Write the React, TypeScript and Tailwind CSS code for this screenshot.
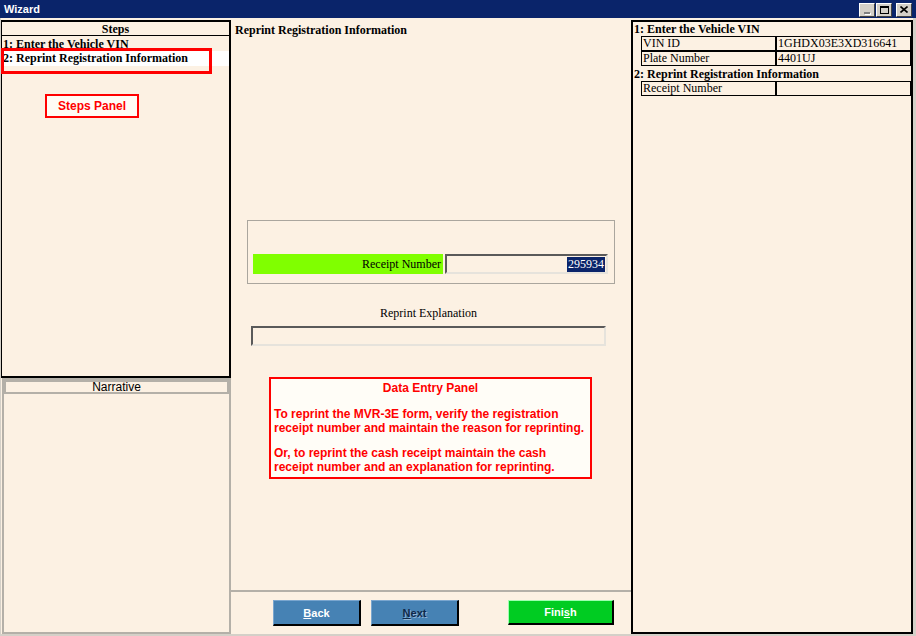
import React from 'react';

const serif = { fontFamily: '"Liberation Serif", "Times New Roman", serif' };
const sans = { fontFamily: '"Liberation Sans", Arial, sans-serif' };

const TitleButton: React.FC<{ children: React.ReactNode; dim?: boolean }> = ({ children, dim }) => (
    <div className={`w-[16px] h-[14px] bg-[#d4d0c8] border-t border-l border-white border-r border-b border-r-[#404040] border-b-[#404040] flex items-center justify-center ${dim ? 'text-[#808080]' : 'text-black'}`}>
        {children}
    </div>
);

const SummaryRow: React.FC<{ label: string; value: string }> = ({ label, value }) => (
    <div className="flex h-[15px] text-[12px] leading-[13px] text-black">
        <div className="w-[135px] border border-black pl-[1px] overflow-hidden whitespace-nowrap">{label}</div>
        <div className="flex-1 border border-black pl-[1px] overflow-hidden whitespace-nowrap">{value}</div>
    </div>
);

const App: React.FC = () => {
    return (
        <div className="w-[916px] h-[636px] bg-[#d4d0c8] flex flex-col overflow-hidden select-none">
            {/* title bar */}
            <div className="h-[18px] bg-[#0a246a] flex items-center pl-[4px] pr-[4px]">
                <span className="text-white font-bold text-[11px]" style={sans}>Wizard</span>
                <div className="ml-auto flex items-center gap-[1px] mt-[1px]">
                    <TitleButton dim>
                        <div className="w-[6px] h-[2px] bg-[#808080] mt-[6px] shadow-[1px_1px_0_#fff]" />
                    </TitleButton>
                    <TitleButton>
                        <div className="w-[9px] h-[8px] border border-black border-t-2" />
                    </TitleButton>
                    <div className="w-[2px]" />
                    <TitleButton>
                        <svg width="8" height="7" viewBox="0 0 8 7">
                            <path d="M0.5 0.5 L7.5 6.5 M7.5 0.5 L0.5 6.5" stroke="black" strokeWidth="1.6" />
                        </svg>
                    </TitleButton>
                </div>
            </div>

            {/* body */}
            <div className="flex-1 flex bg-[#fcf1e3] ml-[1px] mr-[3px] mb-[2px] pt-[2px]">
                {/* left column */}
                <div className="w-[230px] flex flex-col">
                    <div className="relative h-[358px] border-2 border-black border-l-[1px] flex flex-col" style={serif}>
                        <div className="h-[14px] border-b border-black text-center font-bold text-[12px] leading-[14px] text-black">Steps</div>
                        <div className="h-[15px] pl-[1px] font-bold text-[12px] leading-[16px] text-black">1: Enter the Vehicle VIN</div>
                        <div className="h-[15px] pl-[1px] font-bold text-[12px] leading-[15px] text-black bg-white">2: Reprint Registration Information</div>
                        <div className="absolute left-[-1px] top-[26px] w-[211px] h-[26px] border-[3px] border-[#ff0000]" />
                        <div className="absolute left-[43px] top-[72px] w-[94px] h-[24px] border-2 border-[#ff0000] bg-[#fffcf5] flex items-center justify-center text-[#ff0000] font-bold text-[12px]" style={sans}>
                            Steps Panel
                        </div>
                    </div>
                    <div className="ml-[1px] flex-1 border-2 border-[#b4b0a8] flex flex-col">
                        <div className="h-[14px] border-2 border-[#b4b0a8] text-center text-[12px] leading-[11px] text-black" style={sans}>Narrative</div>
                    </div>
                </div>

                {/* center column */}
                <div className="w-[400px] flex flex-col">
                    <div className="pl-[4px] pt-[3px] h-[17px] font-bold text-[12px] leading-[15px] text-black" style={serif}>Reprint Registration Information</div>

                    <div className="mt-[183px] ml-[16px] w-[368px] h-[64px] border border-[#aaa69e] pt-[33px] pl-[5px] flex gap-[2px]" style={serif}>
                        <div className="w-[190px] h-[20px] bg-[#80ff00] text-right pr-[2px] text-[12px] leading-[21px] text-black">Receipt Number</div>
                        <div className="w-[163px] h-[20px] border-2 border-t-[#5a5a5a] border-l-[#5a5a5a] border-r-[#e6e3dc] border-b-[#e6e3dc] flex items-center justify-end pr-[1px]">
                            <span className="bg-[#0a246a] text-white text-[12px] leading-[15px] px-[1px]">295934</span>
                        </div>
                    </div>

                    <div className="mt-[22px] ml-[20px] w-[355px] text-center text-[12px] leading-[14px] text-black" style={serif}>Reprint Explanation</div>
                    <div className="mt-[6px] ml-[20px] w-[355px] h-[20px] border-2 border-t-[#5a5a5a] border-l-[#5a5a5a] border-r-[#e6e3dc] border-b-[#e6e3dc]" />

                    <div className="mt-[31px] ml-[38px] w-[323px] h-[102px] border-2 border-[#ff0000] bg-[#fffdf7] text-[#ff0000] font-bold text-[12px] leading-[14px] px-[3px] pt-[2px]" style={sans}>
                        <div className="text-center">Data Entry Panel</div>
                        <div className="mt-[12px]">To reprint the MVR-3E form, verify the registration receipt number and maintain the reason for reprinting.</div>
                        <div className="mt-[11px]">Or, to reprint the cash receipt maintain the cash receipt number and an explanation for reprinting.</div>
                    </div>

                    <div className="mt-auto h-[44px] border-t-2 border-[#b4b0a8] flex items-start pt-[8px] pl-[42px] text-[11px] font-bold" style={sans}>
                        <button className="w-[88px] h-[26px] bg-[#4682b4] border-t border-l border-[#7aa6cf] border-r-2 border-b-2 border-r-black border-b-black text-white pt-[1px]">
                            <span className="underline">B</span>ack
                        </button>
                        <button className="ml-[10px] w-[88px] h-[26px] bg-[#4682b4] border-t border-l border-[#7aa6cf] border-r-2 border-b-2 border-r-black border-b-black text-[#10294a] [text-shadow:1px_1px_0_#8fb3d6] pt-[1px]">
                            <span className="underline">N</span>ext
                        </button>
                        <button className="ml-[49px] w-[106px] h-[25px] bg-[#00cc22] border-t border-l border-[#9dffb0] border-r-2 border-b-2 border-r-black border-b-black text-white pt-[1px]">
                            Fini<span className="underline">s</span>h
                        </button>
                    </div>
                </div>

                {/* right column */}
                <div className="flex-1 border-2 border-black flex flex-col" style={serif}>
                    <div className="pl-[1px] h-[14px] font-bold text-[12px] leading-[14px] text-black">1: Enter the Vehicle VIN</div>
                    <div className="ml-[8px]">
                        <SummaryRow label="VIN ID" value="1GHDX03E3XD316641" />
                        <SummaryRow label="Plate Number" value="4401UJ" />
                    </div>
                    <div className="pl-[1px] h-[15px] font-bold text-[12px] leading-[16px] text-black">2: Reprint Registration Information</div>
                    <div className="ml-[8px]">
                        <SummaryRow label="Receipt Number" value="" />
                    </div>
                </div>
            </div>
        </div>
    );
};

export default App;
